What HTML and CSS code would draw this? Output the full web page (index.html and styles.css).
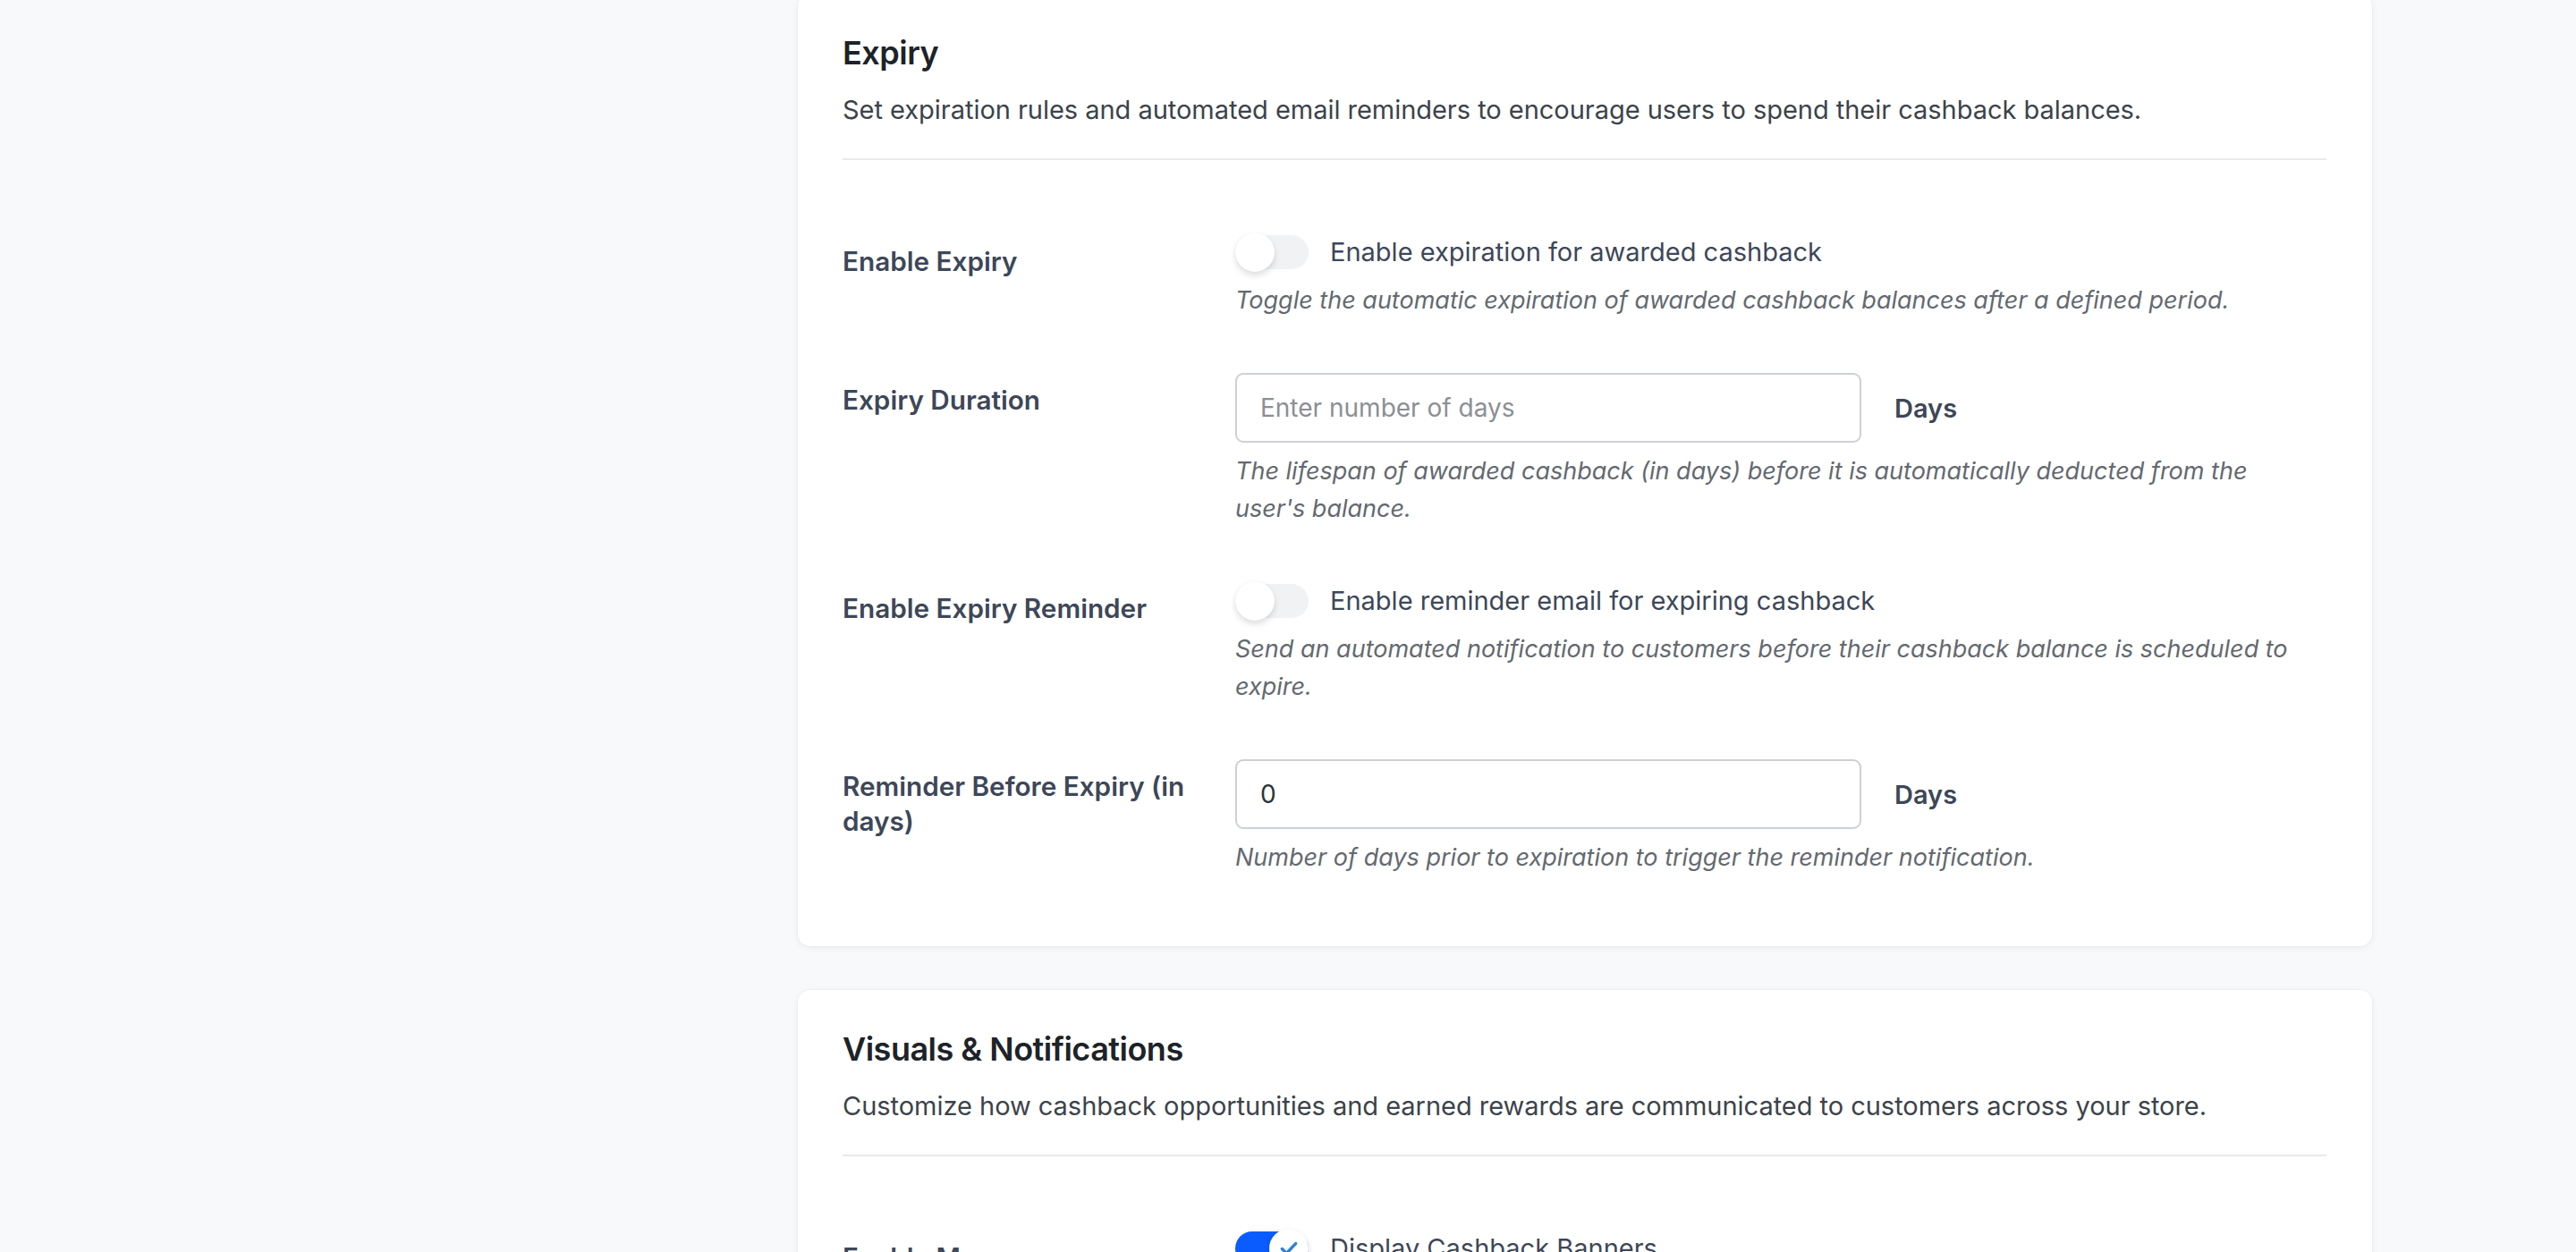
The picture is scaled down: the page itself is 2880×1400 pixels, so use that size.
FILE: index.html
```html
<!DOCTYPE html>
<html lang="en">
<head>
<meta charset="utf-8">
<title>Cashback Settings</title>
<link rel="stylesheet" href="styles.css">
</head>
<body>
<main class="page">
  <section class="card">
    <header class="card-head">
      <h2 class="card-title">Expiry</h2>
      <p class="card-desc">Set expiration rules and automated email reminders to encourage users to spend their cashback balances.</p>
    </header>
    <div class="rows">
      <div class="row">
        <div class="row-label">Enable Expiry</div>
        <div class="row-field">
          <label class="switch-line">
            <span class="switch"><span class="knob"></span></span>
            <span class="switch-text">Enable expiration for awarded cashback</span>
          </label>
          <p class="help">Toggle the automatic expiration of awarded cashback balances after a defined period.</p>
        </div>
      </div>
      <div class="row">
        <div class="row-label">Expiry Duration</div>
        <div class="row-field">
          <div class="input-line">
            <input class="text-input" type="text" placeholder="Enter number of days">
            <span class="unit">Days</span>
          </div>
          <p class="help">The lifespan of awarded cashback (in days) before it is automatically deducted from the user's balance.</p>
        </div>
      </div>
      <div class="row">
        <div class="row-label">Enable Expiry Reminder</div>
        <div class="row-field">
          <label class="switch-line">
            <span class="switch"><span class="knob"></span></span>
            <span class="switch-text">Enable reminder email for expiring cashback</span>
          </label>
          <p class="help">Send an automated notification to customers before their cashback balance is scheduled to expire.</p>
        </div>
      </div>
      <div class="row">
        <div class="row-label">Reminder Before Expiry (in days)</div>
        <div class="row-field">
          <div class="input-line">
            <input class="text-input" type="text" value="0">
            <span class="unit">Days</span>
          </div>
          <p class="help">Number of days prior to expiration to trigger the reminder notification.</p>
        </div>
      </div>
    </div>
  </section>

  <section class="card">
    <header class="card-head">
      <h2 class="card-title">Visuals &amp; Notifications</h2>
      <p class="card-desc">Customize how cashback opportunities and earned rewards are communicated to customers across your store.</p>
    </header>
    <div class="rows">
      <div class="row">
        <div class="row-label">Enable Messages</div>
        <div class="row-field">
          <label class="switch-line">
            <span class="switch is-on"><span class="knob"><svg class="check" viewBox="0 0 24 24" width="26" height="26"><path d="M5 12.5l4.5 4.5L19 7" fill="none" stroke="#2f80d8" stroke-width="3.2" stroke-linecap="round" stroke-linejoin="round"/></svg></span></span>
            <span class="switch-text">Display Cashback Banners</span>
          </label>
          <p class="help">Show cashback banners on product and cart pages.</p>
        </div>
      </div>
    </div>
  </section>
</main>
</body>
</html>
```

FILE: styles.css
```css
* { box-sizing: border-box; }

html, body {
  margin: 0;
  padding: 0;
}

body {
  background: #f8f9fb;
  font-family: Inter, "Noto Sans", "Liberation Sans", sans-serif;
  color: #3c434a;
  overflow: hidden;
  height: 1400px;
}

.page {
  width: 1760px;
  margin: -7px 0 0 892px;
  display: flex;
  flex-direction: column;
  gap: 49px;
}

.card {
  background: #ffffff;
  border-radius: 14px;
  box-shadow: 0 2px 8px rgba(15, 23, 42, 0.06), 0 0 0 1px rgba(15, 23, 42, 0.02);
  padding: 40px 51px 48px 50px;
}

.card-head {
  border-bottom: 2px solid #e8eaed;
  padding-bottom: 32px;
}

.card-title {
  margin: 0;
  font-size: 36px;
  line-height: 52px;
  font-weight: 600;
  color: #1d2327;
  letter-spacing: -0.5px;
}

.card-desc {
  margin: 16px 0 0;
  font-size: 29px;
  line-height: 44px;
  color: #3c434a;
  letter-spacing: -0.03px;
}

.rows {
  margin-top: 51px;
  display: flex;
  flex-direction: column;
}

.row {
  display: flex;
  align-items: flex-start;
}

.row-label {
  width: 400px;
  flex: none;
  margin-right: 39px;
  padding-top: 41px;
  font-size: 29.7px;
  line-height: 39px;
  font-weight: 600;
  color: #3d4758;
}

.row:first-child .row-label {
  padding-top: 43px;
}

.row-field {
  flex: 1;
  padding: 30px 20px 30px 0;
}

.switch-line {
  display: flex;
  align-items: center;
  height: 44px;
  gap: 24px;
}

.switch {
  width: 82px;
  height: 38px;
  border-radius: 19px;
  background: #f1f2f4;
  display: flex;
  align-items: center;
  justify-content: flex-start;
  flex: none;
}

.switch.is-on {
  background: #0a5cff;
  justify-content: flex-end;
}

.knob {
  width: 44px;
  height: 44px;
  border-radius: 50%;
  background: #ffffff;
  box-shadow: 0 4px 7px rgba(0, 0, 0, 0.13), 0 0 1px rgba(0, 0, 0, 0.08);
  display: flex;
  align-items: center;
  justify-content: center;
}

.switch-text {
  font-size: 29px;
  line-height: 44px;
  color: #3d4758;
}

.help {
  margin: 11px 0 0;
  font-size: 27px;
  line-height: 42px;
  font-style: italic;
  color: #646970;
}

.input-line {
  display: flex;
  align-items: center;
  gap: 37px;
}

.text-input {
  width: 700px;
  height: 78px;
  border: 2px solid #cdd0d4;
  border-radius: 9px;
  padding: 0 26px;
  font-family: inherit;
  font-size: 28px;
  color: #2c3338;
  background: #ffffff;
  outline: none;
}

.text-input::placeholder {
  color: #8c8f94;
}

.unit {
  font-size: 29px;
  font-weight: 600;
  color: #3d4758;
}
```
